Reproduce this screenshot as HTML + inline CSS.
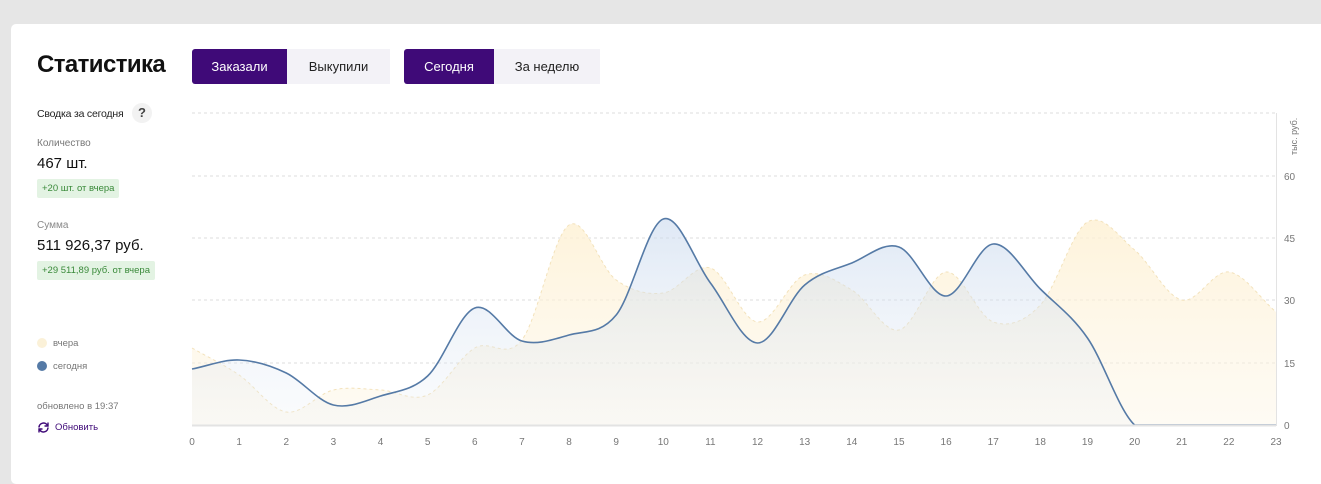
<!DOCTYPE html>
<html><head><meta charset="utf-8"><style>
body{margin:0;background:#e6e6e6;font-family:"Liberation Sans",sans-serif;width:1321px;height:473px;overflow:hidden;position:relative}
.card{position:absolute;left:11px;top:24px;width:1320px;height:460px;background:#fff;border-radius:5px}
.abs{position:absolute;white-space:nowrap}
.btn{position:absolute;top:49px;height:35px;line-height:35px;text-align:center;font-size:13px;color:#222;background:#f3f2f7}
.on{background:#3f0a78;color:#fff;border-radius:3px 0 0 3px}
.badge{position:absolute;left:37px;height:19px;line-height:19px;background:#e3f3e3;color:#3a8a3a;font-size:9.5px;padding:0 5px;border-radius:2px}
</style></head><body>
<div class="card"></div>
<div class="abs" style="left:37px;top:51px;font-size:24px;font-weight:bold;color:#111;letter-spacing:-0.6px">Статистика</div>
<div class="btn on" style="left:192px;width:95px">Заказали</div>
<div class="btn" style="left:287px;width:103px">Выкупили</div>
<div class="btn on" style="left:404px;width:90px">Сегодня</div>
<div class="btn" style="left:494px;width:106px">За неделю</div>
<div class="abs" style="left:37px;top:108px;font-size:10.5px;color:#222;letter-spacing:-0.2px">Сводка за сегодня</div>
<div class="abs" style="left:132px;top:103px;width:20px;height:20px;border-radius:10px;background:#f2f2f2;text-align:center;line-height:20px;font-size:13px;font-weight:bold;color:#444">?</div>
<div class="abs" style="left:37px;top:138px;font-size:10px;color:#777">Количество</div>
<div class="abs" style="left:37px;top:155px;font-size:15px;color:#111">467 шт.</div>
<div class="badge" style="top:179px">+20 шт. от вчера</div>
<div class="abs" style="left:37px;top:220px;font-size:10px;color:#888">Сумма</div>
<div class="abs" style="left:37px;top:237px;font-size:15px;color:#111">511 926,37 руб.</div>
<div class="badge" style="top:261px">+29 511,89 руб. от вчера</div>
<div class="abs" style="left:37px;top:338px;width:10px;height:10px;border-radius:5px;background:#fbf1d8"></div>
<div class="abs" style="left:53px;top:338px;font-size:9.5px;color:#777">вчера</div>
<div class="abs" style="left:37px;top:361px;width:10px;height:10px;border-radius:5px;background:#557aa6"></div>
<div class="abs" style="left:53px;top:361px;font-size:9.5px;color:#777">сегодня</div>
<div class="abs" style="left:37px;top:401px;font-size:9.5px;color:#777">обновлено в 19:37</div>
<svg class="abs" style="left:37px;top:421px" width="13" height="13" viewBox="0 0 13 13"><path d="M2 6.5A4.5 4.5 0 0 1 10.5 4.5M11 6.5A4.5 4.5 0 0 1 2.5 8.5" fill="none" stroke="#3f0a78" stroke-width="1.5"/><path d="M11 1.5v3.5h-3.5M2 11.5v-3.5h3.5" fill="none" stroke="#3f0a78" stroke-width="1.4"/></svg>
<div class="abs" style="left:55px;top:422px;font-size:9.5px;color:#3f0a78">Обновить</div>
<svg class="abs" style="left:0;top:0" width="1321" height="473" id="ch">
<defs><linearGradient id="gy" x1="0" y1="0" x2="0" y2="1"><stop offset="0" stop-color="#fdf0d2" stop-opacity=".8"/><stop offset="1" stop-color="#fdf5e3" stop-opacity=".4"/></linearGradient>
<linearGradient id="gt" x1="0" y1="0" x2="0" y2="1"><stop offset="0" stop-color="#c9d9ee" stop-opacity=".6"/><stop offset="1" stop-color="#e8eef5" stop-opacity=".2"/></linearGradient></defs>
<g stroke="#ddd" stroke-dasharray="3,3" stroke-width="1">
<line x1="192" x2="1276" y1="113" y2="113"/><line x1="192" x2="1276" y1="176" y2="176"/><line x1="192" x2="1276" y1="238" y2="238"/><line x1="192" x2="1276" y1="300" y2="300"/><line x1="192" x2="1276" y1="363" y2="363"/></g>
<path id="ya" fill="url(#gy)"/><path id="yl" fill="none" stroke="#f3e2bb" stroke-dasharray="3,3"/>
<path id="ta" fill="url(#gt)"/><path id="tl" fill="none" stroke="#557aa6" stroke-width="1.6"/>
<line x1="192" x2="1276" y1="425.5" y2="425.5" stroke="#e3e3e3" stroke-width="2"/>
<line x1="1276.5" x2="1276.5" y1="113" y2="426" stroke="#e3e3e3"/>
<g id="xl" fill="#777" font-size="10" font-family="Liberation Sans"></g>
<g fill="#777" font-size="10" font-family="Liberation Sans">
<text x="1284" y="180">60</text><text x="1284" y="242">45</text><text x="1284" y="304">30</text><text x="1284" y="367">15</text><text x="1284" y="429">0</text>
<text transform="translate(1297,155) rotate(-90)" font-size="9">тыс. руб.</text></g>
</svg>
<script>
var x0=192,dx=(1276-192)/23;
var T=[369,360,373,405,396,376,308,341,335,315,219,283,343,285,263,247,296,244,289,338,425,425,425,425];
var Y=[348,375,412,390,390,395,348,340,225,280,293,268,322,275,290,330,272,322,305,222,250,300,272,312];
function p(a){var s="M"+x0+","+a[0];for(var i=0;i<a.length-1;i++){var xa=x0+i*dx,xb=xa+dx;var m0=i>0?(a[i+1]-a[i-1])/2:(a[1]-a[0]);var m1=i<a.length-2?(a[i+2]-a[i])/2:(a[i+1]-a[i]);
var y1=a[i]+m0/3,y2=a[i+1]-m1/3;if(a[i]==425&&a[i+1]==425){y1=y2=425}s+="C"+(xa+dx/3)+","+Math.min(y1,425)+" "+(xb-dx/3)+","+Math.min(y2,425)+" "+xb+","+a[i+1];}return s}
var py=p(Y),pt=p(T),e="L1276,425L192,425Z";
document.getElementById("yl").setAttribute("d",py);document.getElementById("ya").setAttribute("d",py+e);
document.getElementById("tl").setAttribute("d",pt);document.getElementById("ta").setAttribute("d",pt+e);
var g=document.getElementById("xl"),h="";for(var i=0;i<24;i++)h+='<text x="'+(x0+i*dx)+'" y="445" text-anchor="middle">'+i+'</text>';g.innerHTML=h;
</script>
</body></html>
